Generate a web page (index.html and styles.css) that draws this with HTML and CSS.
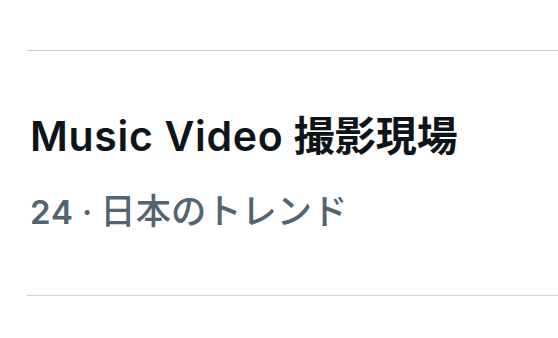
FILE: index.html
```html
<!DOCTYPE html>
<html lang="ja">
<head>
  <meta charset="UTF-8" />
  <meta name="viewport" content="width=device-width, initial-scale=1.0" />
  <title>トレンド</title>
  <link rel="stylesheet" href="styles.css">
</head>
<body>
  <main class="trends">
    <div class="trend">
      <h2 class="trend__title"><span class="trend__latin">Music Video</span> 撮影現場</h2>
      <p class="trend__meta"><span class="trend__count">24</span> · <span class="trend__jp">日本のトレンド</span></p>
    </div>
  </main>
</body>
</html>
```

FILE: styles.css
```css
* {
  margin: 0;
  padding: 0;
  box-sizing: border-box;
}

body {
  background-color: #fff;
  font-family: Inter, "Noto Sans CJK JP", sans-serif;
}

.trends {
  padding-top: 50px;
  padding-left: 27px;
}

.trend {
  border-top: 1px solid #cccccc;
  border-bottom: 1px solid #d4d4d4;
  padding: 61px 0 62px 3px;
}

.trend__title {
  font-size: 41px;
  line-height: 48px;
  font-weight: 600;
  color: #0f1419;
}

.trend__latin {
  letter-spacing: 0.7px;
}

.trend__meta {
  margin-top: 32px;
  font-size: 32px;
  line-height: 40px;
  font-weight: 600;
  color: #536471;
}

.trend__count {
  font-size: 33px;
  letter-spacing: 1px;
}

.trend__jp {
  font-size: 35.3px;
  line-height: 1;
  font-weight: 500;
}
```
